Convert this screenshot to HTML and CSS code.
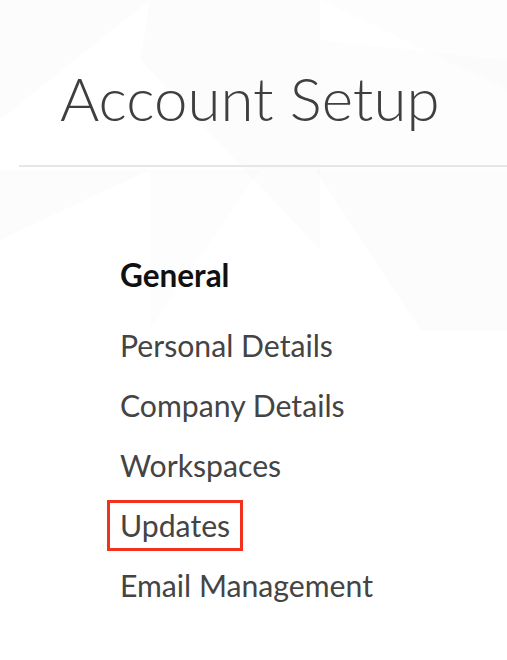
FILE: index.html
```html
<!DOCTYPE html>
<html lang="en">

<head>
    <meta charset="UTF-8">
    <title>Account Setup</title>
    <link rel="stylesheet" href="styles.css">
</head>

<body>
    <svg class="backdrop" width="507" height="660" viewBox="0 0 507 660" aria-hidden="true">
        <polygon points="0,0 150,0 0,120" fill="#000" fill-opacity="0.01" />
        <polygon points="150,0 320,0 320,250 140,60" fill="#000" fill-opacity="0.013" />
        <polygon points="320,0 507,0 507,90" fill="#000" fill-opacity="0.008" />
        <polygon points="0,170 150,170 0,240" fill="#000" fill-opacity="0.012" />
        <polygon points="150,170 260,170 150,330" fill="#000" fill-opacity="0.008" />
        <polygon points="315,170 507,170 507,330 420,330" fill="#000" fill-opacity="0.01" />
        <polygon points="320,40 507,60 507,170 320,170" fill="#000" fill-opacity="0.006" />
    </svg>

    <header class="page-header">
        <h1>Account Setup</h1>
    </header>
    <hr class="divider">

    <nav class="setup-nav">
        <h2>General</h2>
        <ul>
            <li><a href="#">Personal Details</a></li>
            <li><a href="#">Company Details</a></li>
            <li><a href="#">Workspaces</a></li>
            <li><a href="#" class="active">Updates</a></li>
            <li><a href="#">Email Management</a></li>
        </ul>
    </nav>
</body>

</html>
```

FILE: styles.css
```css
body {
    margin: 0;
    font-family: Lato, "Open Sans", sans-serif;
    background-color: #fff;
    color: #444;
    position: relative;
    min-height: 660px;
    overflow: hidden;
}

.backdrop {
    position: absolute;
    top: 0;
    left: 0;
    z-index: -1;
}

.page-header {
    padding: 62px 0 0 60px;
}

.page-header h1 {
    margin: 0;
    font-size: 60px;
    font-weight: 300;
    line-height: 73px;
    color: #3f3f3f;
}

.divider {
    margin: 30px 0 0 19px;
    border: none;
    height: 2px;
    background-color: #e6e6e6;
}

.setup-nav {
    padding: 90px 0 0 107px;
}

.setup-nav h2 {
    margin: 0 0 26px 13px;
    font-size: 31.5px;
    font-weight: 700;
    line-height: 37px;
    color: #111;
}

.setup-nav ul {
    list-style-type: none;
    margin: 0;
    padding: 0;
}

.setup-nav li {
    margin-bottom: 9px;
}

.setup-nav a {
    display: inline-block;
    padding: 5px 10px;
    border: 3px solid transparent;
    font-size: 30.2px;
    line-height: 35px;
    color: #444;
    text-decoration: none;
}

.setup-nav a.active {
    border-color: #f0321f;
}
```
